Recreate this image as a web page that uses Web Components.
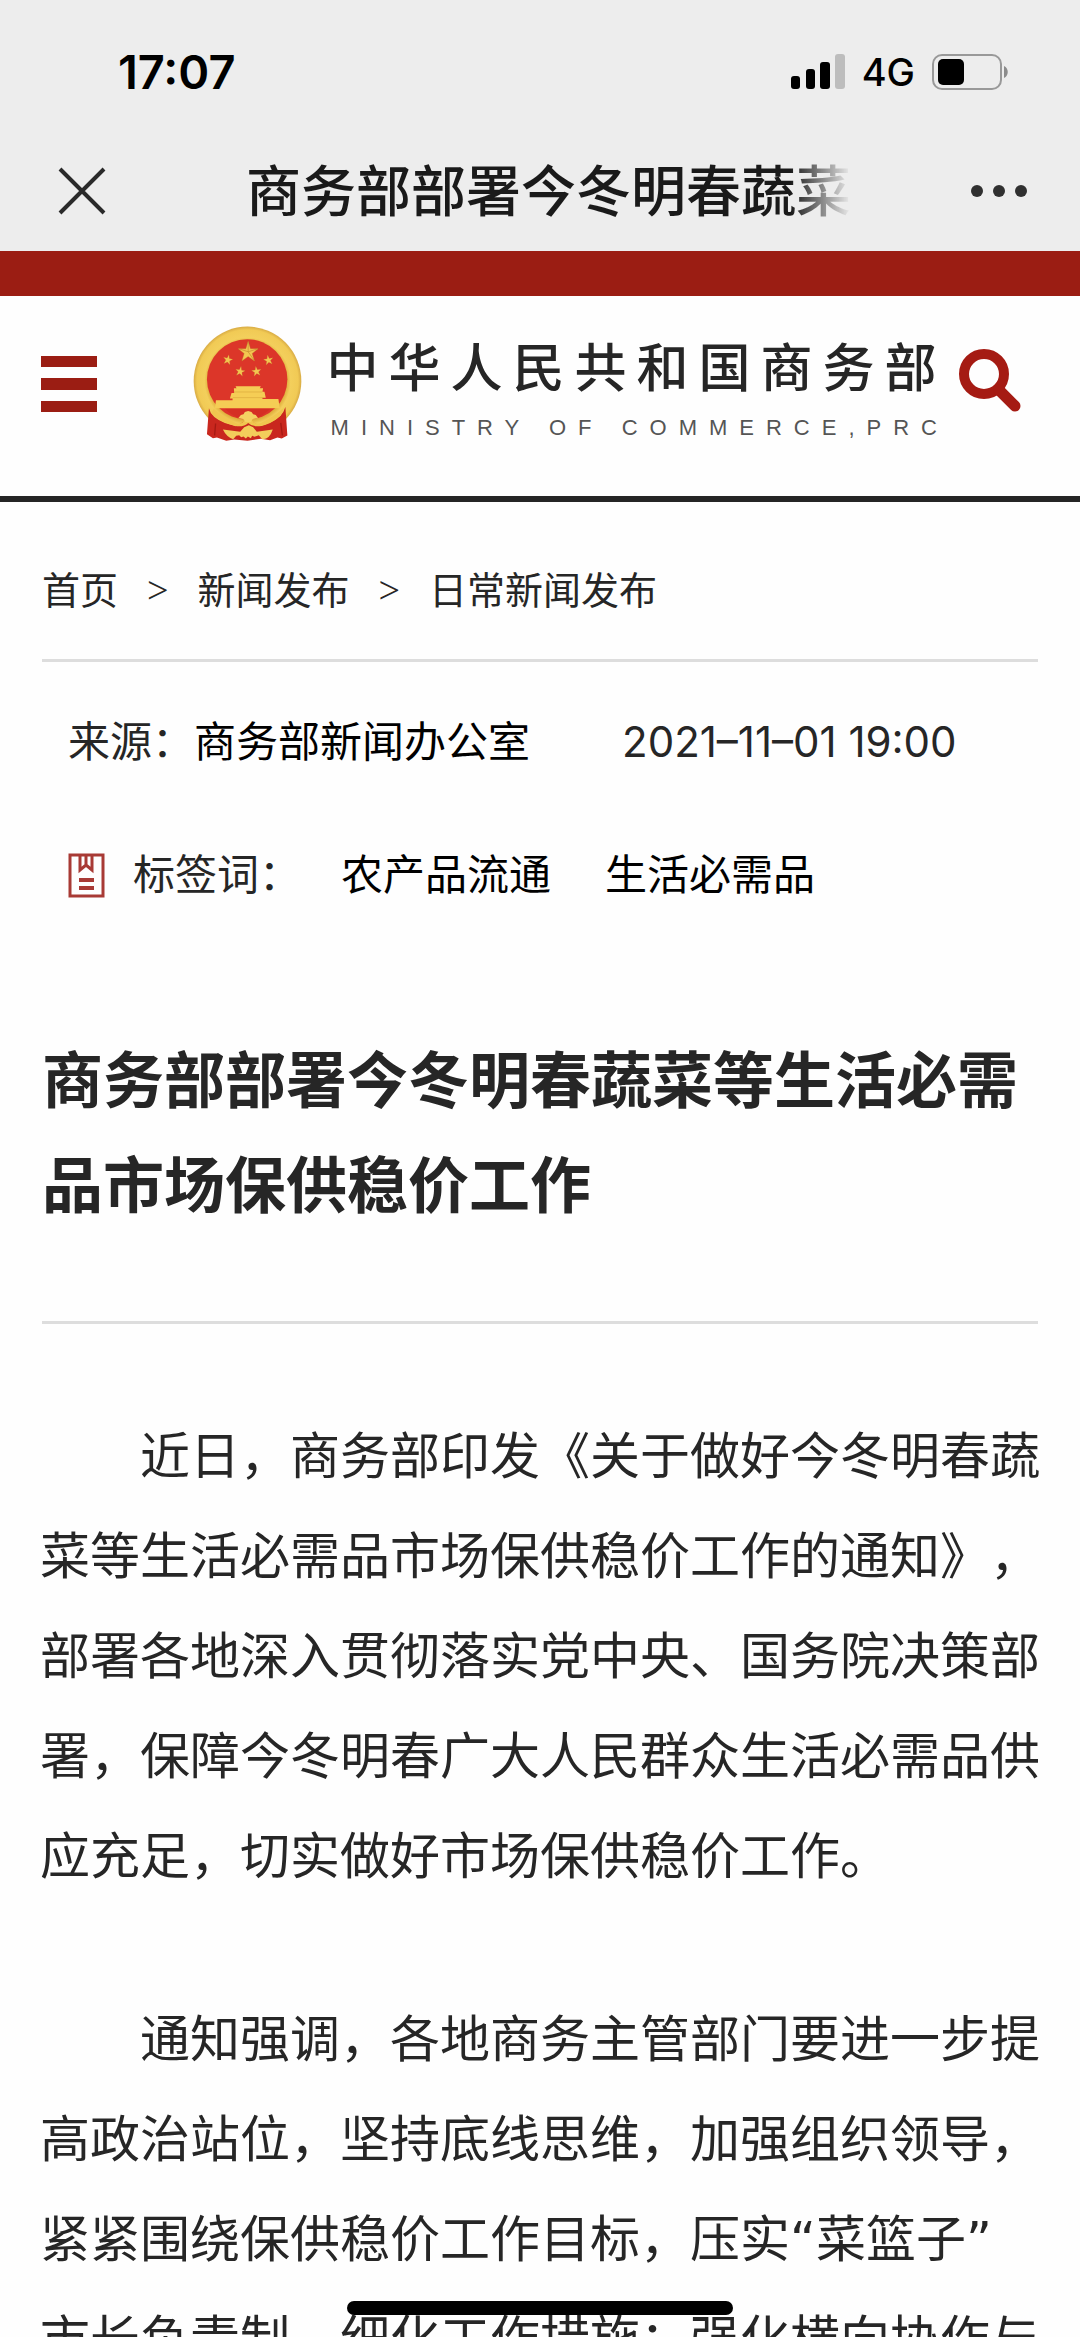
<!DOCTYPE html>
<html lang="zh-CN">
<head>
<meta charset="utf-8">
<meta name="viewport" content="width=device-width, initial-scale=1">
<title>商务部部署今冬明春蔬菜等生活必需品市场保供稳价工作</title>
<style>
    body {
        margin: 0;
        height: 100vh;
        overflow: hidden;
        background: #fefefe;
        color: #262626;
        font-family: Inter, "Noto Sans CJK SC", sans-serif;
        text-spacing-trim: space-all;
    }
</style>
</head>
<body>
<status-bar time="17:07" network="4G"></status-bar>
<nav-bar>商务部部署今冬明春蔬菜</nav-bar>
<site-header>
    中华人民共和国商务部
    <span slot="english">MINISTRY OF COMMERCE,PRC</span>
</site-header>
<main>
    <bread-crumb items="首页,新闻发布,日常新闻发布"></bread-crumb>
    <article-meta tags="农产品流通,生活必需品">
        <span slot="source">商务部新闻办公室</span>
        <time slot="date" datetime="2021-11-01T19:00">2021–11–01 19:00</time>
    </article-meta>
    <news-article>
        <span slot="title">商务部部署今冬明春蔬菜等生活必需品市场保供稳价工作</span>
        <p>近日，商务部印发《关于做好今冬明春蔬菜等生活必需品市场保供稳价工作的通知》，部署各地深入贯彻落实党中央、国务院决策部署，保障今冬明春广大人民群众生活必需品供应充足，切实做好市场保供稳价工作。</p>
        <p>通知强调，各地商务主管部门要进一步提高政治站位，坚持底线思维，加强组织领导，紧紧围绕保供稳价工作目标，压实“菜篮子”<br>市长负责制，细化工作措施；强化横向协作与</p>
    </news-article>
</main>
<home-indicator></home-indicator>

<script>
function makeTemplate(html) {
    const template = document.createElement('template')
    template.innerHTML = html
    return template
}

const statusTemplate = makeTemplate(`
    <style>
        :host {
            display: flex;
            align-items: center;
            justify-content: space-between;
            padding: 44px 72px 30px 118px;
            background: #ededed;
            color: #000;
            line-height: 56px;
        }
        .time {
            font-size: 47px;
            font-weight: 600;
        }
        .right {
            display: flex;
            align-items: center;
            gap: 17px;
            font-size: 38px;
            font-weight: 500;
        }
        svg {
            display: block;
        }
    </style>
    <span class="time"></span>
    <div class="right">
        <svg width="54" height="36" viewBox="0 0 54 36">
            <rect x="0" y="22" width="9" height="13" rx="3"/>
            <rect x="15" y="15" width="9" height="20" rx="3"/>
            <rect x="29" y="8" width="10" height="27" rx="3"/>
            <rect x="44" y="0" width="10" height="35" rx="3" fill="#bdbdbd"/>
        </svg>
        <span class="network"></span>
        <svg width="76" height="36" viewBox="0 0 76 36">
            <rect x="1" y="1" width="68" height="34" rx="9" fill="none" stroke="#999" stroke-width="2"/>
            <rect x="6" y="5" width="26" height="26" rx="5"/>
            <path d="M72 12c5 2 5 10 0 12z" fill="#8c8c8c"/>
        </svg>
    </div>
`)
class StatusBar extends HTMLElement {
    constructor() {
        super()
        this.attachShadow({ mode: 'open' })
        this.shadowRoot.appendChild(statusTemplate.content.cloneNode(true))
        this.shadowRoot.querySelector('.time').textContent = this.getAttribute('time')
        this.shadowRoot.querySelector('.network').textContent = this.getAttribute('network')
    }
}
customElements.define('status-bar', StatusBar)

const navTemplate = makeTemplate(`
    <style>
        :host {
            display: flex;
            align-items: center;
            height: 121px;
            padding: 0 52px 0 58px;
            background: #ededed;
            color: #1a1a1a;
        }
        button {
            display: flex;
            padding: 0;
            border: 0;
            background: none;
        }
        .title {
            flex: 0 1 605px;
            margin: 0 auto 0 140px;
            overflow: hidden;
            white-space: nowrap;
            font-size: 55px;
            font-weight: 500;
            line-height: 80px;
            -webkit-mask-image: linear-gradient(to right, #000 90%, transparent);
            mask-image: linear-gradient(to right, #000 90%, transparent);
        }
    </style>
    <button aria-label="关闭">
        <svg width="48" height="48" viewBox="0 0 48 48" stroke="#2a2a2a" stroke-width="4">
            <path d="M2 2l44 44M46 2L2 46"/>
        </svg>
    </button>
    <span class="title"><slot></slot></span>
    <button aria-label="更多">
        <svg width="58" height="14" viewBox="0 0 58 14" fill="#303030">
            <circle cx="7" cy="7" r="6"/>
            <circle cx="29" cy="7" r="6"/>
            <circle cx="51" cy="7" r="6"/>
        </svg>
    </button>
`)
class NavBar extends HTMLElement {
    constructor() {
        super()
        this.attachShadow({ mode: 'open' })
        this.shadowRoot.appendChild(navTemplate.content.cloneNode(true))
    }
}
customElements.define('nav-bar', NavBar)

const emblemTemplate = makeTemplate(`
    <style>
        :host {
            display: block;
            flex: none;
        }
        svg {
            display: block;
        }
    </style>
    <svg width="109" height="116" viewBox="36 75 328 348">
        <defs>
            <radialGradient id="gold" cx="50%" cy="50%" r="50%">
                <stop offset="72%" stop-color="#dfae3c"/>
                <stop offset="80%" stop-color="#f3cf5c"/>
                <stop offset="94%" stop-color="#f1ca55"/>
                <stop offset="100%" stop-color="#d8ab44"/>
            </radialGradient>
            <path id="star" d="M0-32L7-9H30L12 5 19 28 0 14-19 28-12 5-30-9H-7z"/>
        </defs>
        <ellipse cx="200" cy="240" rx="162" ry="164" fill="url(#gold)"/>
        <circle cx="199" cy="235" r="121" fill="#dc3629"/>
        <path d="M84 322Q90 350 132 366L165 376 200 356 240 376 270 364Q306 348 314 318L320 404 303 413 290 410 268 418 240 414 200 420 160 416 136 420 108 410 96 412 78 400z" fill="#c9271e"/>
        <path d="M104 368l-3 36M300 366l5 38" stroke="#a51a13" stroke-width="4" fill="none"/>
        <path d="M98 323Q120 345 165 366Q180 372 190 360H214Q226 372 240 366Q288 342 310 320L300 344Q270 372 236 376Q214 378 202 366Q190 378 168 376Q118 366 92 338z" fill="#f0c64f"/>
        <path d="M132 323H270Q248 344 226 352L202 336 178 352Q150 344 132 323z" fill="#d52f24"/>
        <path d="M172 352l8-10 8-2 4-7 10-3 10 3 5 7 8 2 7 10-16 2-6 9h-16l-7-9z" fill="#f4d263"/>
        <path d="M159 262h8l-3-6h76l-3 6h10l-2 10h6l4 18h-10v4h48l4 28H102l3-24h50v-5h-8l5-17h8z" fill="#f5cd55"/>
        <path d="M160 273h84M156 290h92" stroke="#d9a93d" stroke-width="2" fill="none"/>
        <path d="M126 386l52 7 12-14 14-6 13 6 11 14 48-7q-10 31-32 29l-10-12-13 5-7-3-4 7-9-5-6 6-7-6-7 2-6-6-9 2-9 10q-20-6-31-29z" fill="#f3cd5b"/>
        <g fill="#f3c651" stroke="#b8822a" stroke-width="1">
            <use href="#star" transform="translate(202 152)"/>
            <use href="#star" transform="translate(141 176) rotate(12) scale(.48)"/>
            <use href="#star" transform="translate(263 177) rotate(-10) scale(.48)"/>
            <use href="#star" transform="translate(178 211) rotate(10) scale(.48)"/>
            <use href="#star" transform="translate(227 211) rotate(-8) scale(.48)"/>
        </g>
        <path d="M202 122v30l-28-9M202 152l18 26M202 152l29-9" stroke="#c18a2d" stroke-width="2" fill="none"/>
    </svg>
`)
class StateEmblem extends HTMLElement {
    constructor() {
        super()
        this.attachShadow({ mode: 'open' })
        this.shadowRoot.appendChild(emblemTemplate.content.cloneNode(true))
    }
}
customElements.define('state-emblem', StateEmblem)

const headerTemplate = makeTemplate(`
    <style>
        :host {
            display: flex;
            align-items: center;
            gap: 9px;
            padding: 23px 58px 47px 41px;
            border-top: 45px solid #9b1d13;
            border-bottom: 6px solid #252525;
        }
        button {
            display: flex;
            flex: none;
            padding: 0;
            border: 0;
            background: none;
        }
        .logo {
            display: flex;
            align-items: center;
            gap: 25px;
            margin-left: auto;
            white-space: nowrap;
        }
        .name {
            padding-top: 12px;
        }
        .chinese {
            font-size: 52px;
            font-weight: 500;
            line-height: 76px;
            letter-spacing: 10px;
        }
        .english {
            padding-left: 4px;
            font-family: "Liberation Sans", sans-serif;
            font-size: 22px;
            line-height: 42px;
            letter-spacing: 12px;
            color: #555;
        }
    </style>
    <button aria-label="菜单">
        <svg width="56" height="56" viewBox="0 0 56 56" fill="#9b1d13">
            <path d="M0 0h56v11H0zM0 22h56v12H0zM0 45h56v11H0z"/>
        </svg>
    </button>
    <div class="logo">
        <state-emblem></state-emblem>
        <div class="name">
            <div class="chinese"><slot></slot></div>
            <div class="english"><slot name="english"></slot></div>
        </div>
    </div>
    <button aria-label="搜索">
        <svg width="64" height="72" viewBox="0 0 64 72" fill="none" stroke="#a51b13">
            <circle cx="26" cy="26" r="20" stroke-width="10"/>
            <path d="M41 42l16 16" stroke-width="11" stroke-linecap="round"/>
        </svg>
    </button>
`)
class SiteHeader extends HTMLElement {
    constructor() {
        super()
        this.attachShadow({ mode: 'open' })
        this.shadowRoot.appendChild(headerTemplate.content.cloneNode(true))
    }
}
customElements.define('site-header', SiteHeader)

const crumbTemplate = makeTemplate(`
    <style>
        :host {
            display: block;
            margin: 0 42px;
            padding: 58px 0 39px;
            border-bottom: 3px solid #ddd;
            font-size: 38px;
            line-height: 60px;
        }
        nav {
            display: flex;
            gap: 29px;
        }
        a {
            color: inherit;
            text-decoration: none;
        }
        .sep {
            font-family: "Liberation Serif", serif;
        }
    </style>
    <nav></nav>
`)
class BreadCrumb extends HTMLElement {
    constructor() {
        super()
        this.attachShadow({ mode: 'open' })
        this.shadowRoot.appendChild(crumbTemplate.content.cloneNode(true))
        this.shadowRoot.querySelector('nav').innerHTML = this.getAttribute('items')
            .split(',')
            .map(item => `<a href="#">${item}</a>`)
            .join('<span class="sep">&gt;</span>')
    }
}
customElements.define('bread-crumb', BreadCrumb)

const metaTemplate = makeTemplate(`
    <style>
        :host {
            display: flex;
            flex-direction: column;
            gap: 73px;
            padding: 50px 68px 0;
            font-size: 42px;
            line-height: 60px;
        }
        .row {
            display: flex;
            align-items: center;
        }
        .source, a {
            color: #000;
        }
        .date {
            margin-left: 92px;
        }
        svg {
            margin-right: 28px;
        }
        .tags {
            display: flex;
            gap: 54px;
            margin-left: 40px;
        }
        a {
            text-decoration: none;
        }
    </style>
    <div class="row">
        <span>来源：</span>
        <span class="source"><slot name="source"></slot></span>
        <span class="date"><slot name="date"></slot></span>
    </div>
    <div class="row">
        <svg width="37" height="45" viewBox="0 0 37 45" fill="none" stroke="#a83a35">
            <rect x="2" y="2" width="33" height="41" stroke-width="3"/>
            <path d="M12 3v14l6-5 6 5V3M18 3v8" stroke-width="3"/>
            <path d="M11 27h15M11 35h15" stroke-width="4"/>
        </svg>
        <span>标签词：</span>
        <div class="tags"></div>
    </div>
`)
class ArticleMeta extends HTMLElement {
    constructor() {
        super()
        this.attachShadow({ mode: 'open' })
        this.shadowRoot.appendChild(metaTemplate.content.cloneNode(true))
        this.shadowRoot.querySelector('.tags').innerHTML = this.getAttribute('tags')
            .split(',')
            .map(tag => `<a href="#">${tag}</a>`)
            .join('')
    }
}
customElements.define('article-meta', ArticleMeta)

const articleTemplate = makeTemplate(`
    <style>
        :host {
            display: block;
            padding: 124px 40px 0;
        }
        h1 {
            margin: 0 2px;
            padding-bottom: 82px;
            border-bottom: 3px solid #ddd;
            font-size: 61px;
            font-weight: 700;
            line-height: 105px;
        }
        ::slotted(p) {
            margin: 83px 0 0;
            font-family: "DejaVu Sans", "Noto Sans CJK SC", sans-serif;
            font-size: 50px;
            line-height: 100px;
            text-indent: 2em;
        }
    </style>
    <h1><slot name="title"></slot></h1>
    <slot></slot>
`)
class NewsArticle extends HTMLElement {
    constructor() {
        super()
        this.attachShadow({ mode: 'open' })
        this.shadowRoot.appendChild(articleTemplate.content.cloneNode(true))
    }
}
customElements.define('news-article', NewsArticle)

const indicatorTemplate = makeTemplate(`
    <style>
        :host {
            position: fixed;
            bottom: 22px;
            left: 0;
            right: 0;
            display: flex;
            justify-content: center;
        }
        div {
            width: 386px;
            height: 14px;
            border-radius: 7px;
            background: #000;
        }
    </style>
    <div></div>
`)
class HomeIndicator extends HTMLElement {
    constructor() {
        super()
        this.attachShadow({ mode: 'open' })
        this.shadowRoot.appendChild(indicatorTemplate.content.cloneNode(true))
    }
}
customElements.define('home-indicator', HomeIndicator)
</script>
</body>
</html>
